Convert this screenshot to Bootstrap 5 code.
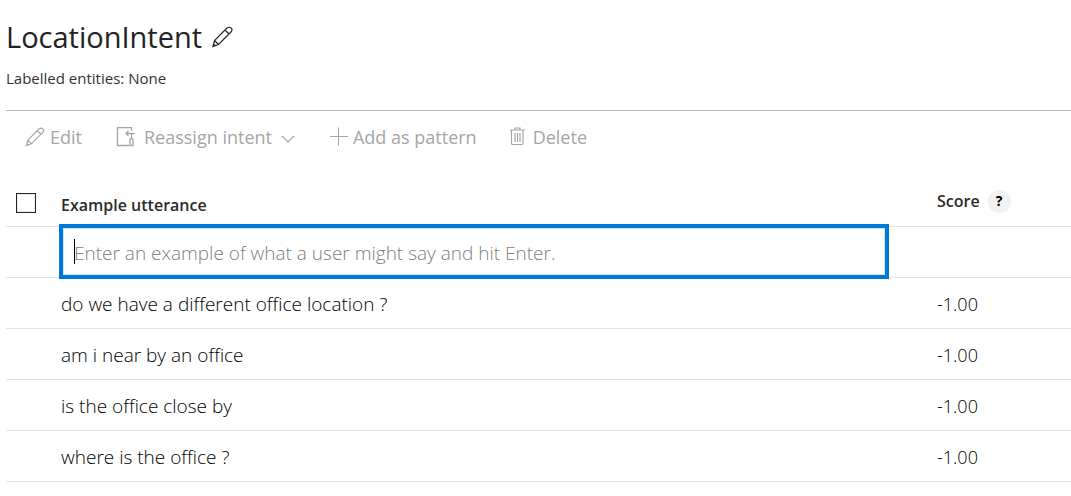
<!DOCTYPE html>
<html lang="en">
<head>
<meta charset="utf-8">
<meta name="viewport" content="width=device-width, initial-scale=1">
<title>LocationIntent</title>
<link href="https://cdn.jsdelivr.net/npm/bootstrap@5.3.0/dist/css/bootstrap.min.css" rel="stylesheet">
<style>
  body { font-family: "Open Sans", "Noto Sans", sans-serif; font-size: 18px; line-height: 24px; color: #2b2b2b; background: #fff; }
  svg { fill: none; stroke: currentColor; flex: none; }
  .page { padding: 17px 0 0 6px; }
  .intent-title { font-size: 29px; line-height: 40px; font-weight: 400; color: #222; }
  .title-row { gap: 10px; }
  .entities { font-size: 15px; line-height: 20px; margin-top: 11px; color: #333; }
  .divider { margin: 22px 0 0; border-top: 1px solid #b8b8b8; opacity: 1; }
  .toolbar { padding: 14px 0 0 19px; gap: 33px; }
  .tool, .tool:disabled { font-size: 18px; line-height: 24px; color: #a6a6a6; border: 0; padding: 0; opacity: 1; font-weight: 400; }
  .utterances { margin-top: 28px; --bs-table-color: #2b2b2b; table-layout: fixed; }
  .utterances th, .utterances td { height: 51px; padding: 0; vertical-align: middle; border-bottom: 1px solid #e3e3e3; }
  .utterances th { font-size: 16px; font-weight: 600; height: 49px; line-height: 22px; }
  .utterances td { padding-top: 3px; font-size: 19px; font-weight: 300; color: #000; }
  .col-pick { width: 55px; }
  .col-score { width: 182px; }
  .pick-box { appearance: none; display: block; width: 20px; height: 20px; margin: 3px 0 0 10px; border: 1px solid #222; box-shadow: inset 0 0 0 1px #eee; border-radius: 0; }
  .help { width: 23px; height: 23px; font-size: 14px; line-height: 22px; font-weight: 700; background: #f1f1f1; color: #000; }
  .utterances td.entry { padding: 0; }
  .entry .form-control { width: calc(100% + 2px); height: 55px; margin: -3px 0 -2px -2px; padding: 3px 12px 0 11px; border: 4px solid #0078d7; border-radius: 0; font-size: 19px; font-weight: 300; box-shadow: inset 0 0 0 1px #cfe5f8; position: relative; caret-color: transparent;
    background: linear-gradient(#000, #000) 11px 11px / 1px 25px no-repeat #fff; }
  .entry .form-control::placeholder { color: #808080; opacity: 1; }
  .utterances .score { padding-left: 48px; }
  .utterances td.score { font-size: 18px; }
</style>
</head>
<body>
<main class="page">
  <header>
    <div class="title-row d-flex align-items-center">
      <h1 class="intent-title mb-0">LocationIntent</h1>
      <button type="button" class="btn p-0 border-0 d-flex" aria-label="Rename intent">
        <svg width="22" height="22" viewBox="0 0 22 22" stroke-width="1.2"><path d="M1 20.500l1.500-6L15 2q2-1.500 4 0t0 4L6.500 18.500zM2.500 14.500l4 4M13 4l4 4M1.500 18l2 2"/></svg>
      </button>
    </div>
    <p class="entities mb-0">Labelled entities: None</p>
  </header>
  <hr class="divider">
  <div class="toolbar d-flex align-items-center" role="toolbar" aria-label="Utterance actions">
    <button type="button" class="tool btn d-flex align-items-center gap-1" disabled>
      <svg width="21" height="20" viewBox="0 0 22 22" stroke-width="1.3"><path d="M1 20.500l1.500-6L15 2q2-1.500 4 0t0 4L6.500 18.500zM2.500 14.500l4 4M13 4l4 4M1.500 18l2 2"/></svg>
      Edit</button>
    <button type="button" class="tool btn d-flex align-items-center" disabled>
      <svg class="me-2" width="21" height="20" viewBox="0 0 21 20" stroke-width="1.3"><path d="M16.500 4V.5H2.500V18.500H14M19.500 6.500H11M13.500 4L11 6.500L13.500 9M16.500 6.500V11M15 18.500V12.500L16.500 11L18 12.500V18.500Z"/></svg>
      Reassign intent
      <svg class="ms-2 mt-1" width="16" height="16" viewBox="0 0 16 16" stroke-width="1.2"><path d="M2 5l6 6 6-6"/></svg></button>
    <button type="button" class="tool btn d-flex align-items-center gap-1" disabled>
      <svg width="20" height="20" viewBox="0 0 20 20" stroke-width="1"><path d="M1 9.500H19M9.500 .5V18.500"/></svg>
      Add as pattern</button>
    <button type="button" class="tool btn d-flex align-items-center gap-2" disabled>
      <svg width="15" height="20" viewBox="0 0 15 20" stroke-width="1.2"><path d="M0 3H15M5 3V1H10V3M1.500 3V16.500q0 1 1 1H12q1 0 1-1V3M5 6V15M7.500 6V15M10 6V15"/></svg>
      Delete</button>
  </div>
  <table class="utterances table mb-0">
    <thead>
      <tr>
        <th class="col-pick"><input type="checkbox" class="pick-box" aria-label="Select all utterances"></th>
        <th scope="col" class="pt-2">Example utterance</th>
        <th scope="col" class="col-score score">
          <div class="d-flex align-items-center gap-2">Score
            <button type="button" class="help btn rounded-circle border-0 p-0" aria-label="About the score">?</button>
          </div>
        </th>
      </tr>
    </thead>
    <tbody>
      <tr>
        <td></td>
        <td class="entry"><input type="text" class="form-control" aria-label="Example utterance" placeholder="Enter an example of what a user might say and hit Enter."></td>
        <td></td>
      </tr>
      <tr><td></td><td>do we have a different office location ?</td><td class="score">-1.00</td></tr>
      <tr><td></td><td>am i near by an office</td><td class="score">-1.00</td></tr>
      <tr><td></td><td>is the office close by</td><td class="score">-1.00</td></tr>
      <tr><td></td><td>where is the office ?</td><td class="score">-1.00</td></tr>
    </tbody>
  </table>
</main>
<script src="https://cdn.jsdelivr.net/npm/bootstrap@5.3.0/dist/js/bootstrap.bundle.min.js"></script>
</body>
</html>
